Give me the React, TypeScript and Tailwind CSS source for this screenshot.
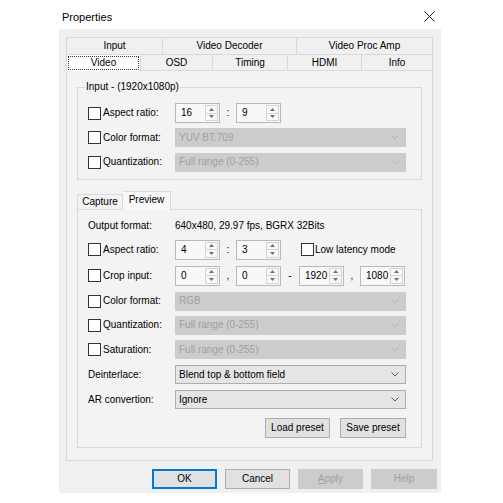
import React from 'react'

const font = "font-['Liberation_Sans',Arial,sans-serif]"

function Check() {
  return <span className="block h-[13px] w-[13px] shrink-0 border border-[#333333] bg-white" />
}

function Arrow({ up }: { up?: boolean }) {
  return (
    <svg width="5" height="3" viewBox="0 0 5 3">
      <path d={up ? 'M0 3 L2.5 0 L5 3 Z' : 'M0 0 L2.5 3 L5 0 Z'} fill="#707070" />
    </svg>
  )
}

function Spin({ value }: { value: string }) {
  return (
    <div className="flex h-[20px] w-[45px] shrink-0 border border-[#b9b9b9] bg-[#f8f8f8]">
      <div className="flex flex-1 items-center pl-[5px]">{value}</div>
      <div className="my-[1px] mr-[1px] flex w-[13px] flex-col border border-[#d4d4d4]">
        <div className="flex flex-1 items-center justify-center border-b border-[#d4d4d4]">
          <Arrow up />
        </div>
        <div className="flex flex-1 items-center justify-center">
          <Arrow />
        </div>
      </div>
    </div>
  )
}

function Sep({ ch, w }: { ch: string; w: string }) {
  return <span className={`${w} shrink-0 text-center`}>{ch}</span>
}

function Select({ value, disabled }: { value: string; disabled?: boolean }) {
  return (
    <div
      className={
        disabled
          ? 'flex h-[19px] w-[231px] items-center justify-between border border-[#cccccc] bg-[#cccccc] pl-[3px] pr-[6px] text-[#a0a0a0]'
          : 'flex h-[19px] w-[231px] items-center justify-between border border-[#adadad] bg-[#e5e5e5] pl-[3px] pr-[6px] text-black'
      }
    >
      <span>{value}</span>
      <svg width="8" height="5" viewBox="0 0 8 5">
        <path d="M0.5 0.5 L4 4 L7.5 0.5" fill="none" stroke={disabled ? '#b4b4b4' : '#5a5a5a'} strokeWidth="1" />
      </svg>
    </div>
  )
}

function Row({ h, check, label, children }: { h: string; check?: boolean; label: string; children?: React.ReactNode }) {
  return (
    <div className={`flex ${h} items-center`}>
      <div className="flex w-[87px] shrink-0 items-center gap-[2px]">
        {check && <Check />}
        <span>{label}</span>
      </div>
      {children}
    </div>
  )
}

function Button({ label, primary, disabled, w = 'w-[65px]' }: { label: React.ReactNode; primary?: boolean; disabled?: boolean; w?: string }) {
  let cls = 'border-[#adadad] bg-[#e1e1e1] text-black'
  if (primary) cls = 'border-[#0078d7] bg-[#e1e1e1] text-black shadow-[inset_0_0_0_1px_#0078d7]'
  if (disabled) cls = 'border-[#cccccc] bg-[#cccccc] text-[#a0a0a0]'
  return <div className={`flex h-[20px] ${w} items-center justify-center border ${cls}`}>{label}</div>
}

export default function App() {
  const row1 = [
    { label: 'Input', w: 'w-[97px]' },
    { label: 'Video Decoder', w: 'w-[134px]' },
    { label: 'Video Proc Amp', w: 'w-[136px]' },
  ]
  const row2 = [
    { label: 'OSD', w: 'w-[72px]' },
    { label: 'Timing', w: 'w-[75px]' },
    { label: 'HDMI', w: 'w-[74px]' },
    { label: 'Info', w: 'w-[71px]' },
  ]

  return (
    <div className={`h-[503px] w-[503px] overflow-hidden bg-white text-[10px] leading-[12px] text-black ${font}`}>
      {/* title bar */}
      <div className="flex h-[29px] items-center justify-between pl-[62px] pr-[68px] pt-[4px]">
        <span className="text-[11px]">Properties</span>
        <svg width="11" height="11" viewBox="0 0 11 11">
          <path d="M0.5 0.5 L10.5 10.5 M10.5 0.5 L0.5 10.5" stroke="#222" strokeWidth="1" />
        </svg>
      </div>

      {/* dialog body */}
      <div className="ml-[59px] flex h-[464px] w-[382px] flex-col bg-[#f0f0f0] pl-[7px] pt-[8px]">
        {/* top tab rows */}
        <div className="flex h-[17px]">
          {row1.map((t) => (
            <div key={t.label} className={`${t.w} flex items-center justify-center border border-b-0 border-l-0 border-[#d9d9d9] first:border-l`}>
              {t.label}
            </div>
          ))}
        </div>
        <div className="relative z-10 flex h-[16px]">
          <div className="-mb-px flex h-[17px] w-[75px] items-center justify-center border border-b-0 border-[#d9d9d9] bg-white p-[1px]">
            <div className="flex h-full w-full items-center justify-center border border-dotted border-[#333]">Video</div>
          </div>
          {row2.map((t) => (
            <div key={t.label} className={`${t.w} flex items-center justify-center border-t border-r border-[#d9d9d9]`}>
              {t.label}
            </div>
          ))}
        </div>

        {/* tab page */}
        <div className="flex h-[391px] w-[367px] flex-col border border-[#d9d9d9] bg-[#f3f3f3] px-[10px]">
          <fieldset className="mt-[10px] border border-[#d9d9d9] px-[10px] pb-[5px] pt-[8px]">
            <legend className="ml-[-3px] px-[1px]">Input - (1920x1080p)</legend>
            <Row h="h-[24px]" check label="Aspect ratio:">
              <Spin value="16" />
              <Sep ch=":" w="w-[16px]" />
              <Spin value="9" />
            </Row>
            <Row h="h-[25px]" check label="Color format:">
              <Select value="YUV BT.709" disabled />
            </Row>
            <Row h="h-[24px]" check label="Quantization:">
              <Select value="Full range (0-255)" disabled />
            </Row>
          </fieldset>

          {/* inner tabs */}
          <div className="relative z-10 mt-[11px] flex h-[18px] items-end">
            <div className="flex h-[15px] w-[46px] items-center justify-center border border-b-0 border-[#d9d9d9]">Capture</div>
            <div className="-mb-px flex h-[19px] w-[48px] items-center justify-center border border-b-0 border-l-0 border-[#d9d9d9] bg-[#f8f8f8] pb-[2px]">
              Preview
            </div>
          </div>
          <div className="flex h-[239px] flex-col border border-[#d9d9d9] bg-[#f3f3f3] px-[10px] pt-[4px]">
            <Row h="h-[23px]" label="Output format:">
              <span>640x480, 29.97 fps, BGRX 32Bits</span>
            </Row>
            <Row h="h-[25px]" check label="Aspect ratio:">
              <Spin value="4" />
              <Sep ch=":" w="w-[16px]" />
              <Spin value="3" />
              <div className="ml-[20px] flex items-center gap-[1px]">
                <Check />
                <span>Low latency mode</span>
              </div>
            </Row>
            <Row h="h-[27px]" check label="Crop input:">
              <Spin value="0" />
              <Sep ch="," w="w-[16px]" />
              <Spin value="0" />
              <Sep ch="-" w="w-[18px]" />
              <Spin value="1920" />
              <Sep ch="," w="w-[16px]" />
              <Spin value="1080" />
            </Row>
            <Row h="h-[24px]" check label="Color format:">
              <Select value="RGB" disabled />
            </Row>
            <Row h="h-[24px]" check label="Quantization:">
              <Select value="Full range (0-255)" disabled />
            </Row>
            <Row h="h-[25px]" check label="Saturation:">
              <Select value="Full range (0-255)" disabled />
            </Row>
            <Row h="h-[25px]" label="Deinterlace:">
              <Select value="Blend top & bottom field" />
            </Row>
            <Row h="h-[25px]" label="AR convertion:">
              <Select value="Ignore" />
            </Row>
            <div className="mt-[6px] flex w-[318px] justify-end gap-[10px]">
              <Button label="Load preset" />
              <Button label="Save preset" w="w-[66px]" />
            </div>
          </div>
        </div>

        {/* dialog buttons */}
        <div className="mt-[8px] flex justify-end gap-[8px] pr-[4px]">
          <Button label="OK" primary />
          <Button label="Cancel" />
          <Button
            label={
              <span>
                <span className="underline">A</span>pply
              </span>
            }
            disabled
          />
          <Button label="Help" disabled w="w-[66px]" />
        </div>
      </div>
    </div>
  )
}
